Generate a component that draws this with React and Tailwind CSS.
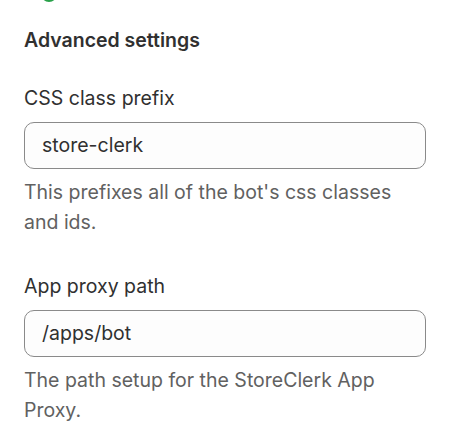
import React from "react";

const Field = ({ label, value, help }) => (
	<div className="flex flex-col">
		<label className="text-[19.5px] leading-[30px] text-[#303030]">{label}</label>
		<div className="mt-[9px] h-[47px] flex items-center rounded-[10px] border border-[#8a8a8a] bg-[#fdfdfd] pl-[17px] text-[19.5px] text-[#303030]">
			{value}
		</div>
		<p className="mt-[8px] text-[19.5px] leading-[30px] text-[#616161]">{help}</p>
	</div>
);

export default function App() {
	return (
		<div
			className="relative w-[450px] h-[423px] overflow-hidden bg-white px-6"
			style={{ fontFamily: "Inter, 'Noto Sans', sans-serif" }}
		>
			{/* bottom of a status dot from the card above */}
			<div className="absolute left-[41px] top-[-14px] h-[16px] w-[16px] rounded-full bg-[#29a14a]" />

			<h2 className="pt-[25px] text-[19.5px] leading-[30px] font-semibold text-[#303030]">
				Advanced settings
			</h2>

			<div className="mt-[28px] flex flex-col gap-[34px]">
				<Field
					label="CSS class prefix"
					value="store-clerk"
					help="This prefixes all of the bot's css classes and ids."
				/>
				<Field
					label="App proxy path"
					value="/apps/bot"
					help="The path setup for the StoreClerk App Proxy."
				/>
			</div>
		</div>
	);
}
